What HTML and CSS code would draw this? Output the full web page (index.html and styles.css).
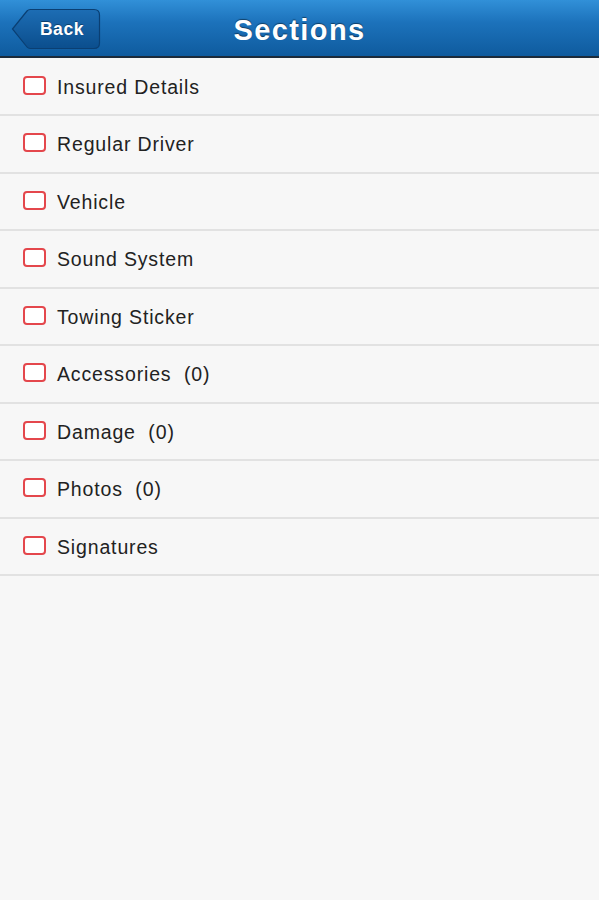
FILE: index.html
```html
<!DOCTYPE html>
<html lang="en">
<head>
  <meta charset="UTF-8" />
  <meta name="viewport" content="width=device-width, initial-scale=1" />
  <title>Sections</title>
  <link rel="stylesheet" href="styles.css">
</head>
<body>
  <header class="nav-bar">
    <div class="nav-left">
      <button class="back-btn" type="button">
        <svg class="back-shape" width="90" height="42" viewBox="0 0 90 42">
          <defs>
            <linearGradient id="backGrad" x1="0" y1="0" x2="0" y2="1">
              <stop offset="0" stop-color="#1d6db4" />
              <stop offset="1" stop-color="#0b4e8d" />
            </linearGradient>
          </defs>
          <path d="M1.5 21 L16 3 Q17.2 1.5 19.5 1.5 L83 1.5 Q88.5 1.5 88.5 7 L88.5 35 Q88.5 40.5 83 40.5 L19.5 40.5 Q17.2 40.5 16 39 Z"
                fill="url(#backGrad)" stroke="#0a3f73" stroke-width="1.2" />
        </svg>
        <span class="back-label">Back</span>
      </button>
    </div>
    <h1 class="nav-title">Sections</h1>
    <div class="nav-right"></div>
  </header>

  <ul class="section-list">
    <li class="section-row"><span class="check"></span><span class="label">Insured Details</span></li>
    <li class="section-row"><span class="check"></span><span class="label">Regular Driver</span></li>
    <li class="section-row"><span class="check"></span><span class="label">Vehicle</span></li>
    <li class="section-row"><span class="check"></span><span class="label">Sound System</span></li>
    <li class="section-row"><span class="check"></span><span class="label">Towing Sticker</span></li>
    <li class="section-row"><span class="check"></span><span class="label">Accessories&nbsp; (0)</span></li>
    <li class="section-row"><span class="check"></span><span class="label">Damage&nbsp; (0)</span></li>
    <li class="section-row"><span class="check"></span><span class="label">Photos&nbsp; (0)</span></li>
    <li class="section-row"><span class="check"></span><span class="label">Signatures</span></li>
  </ul>
</body>
</html>
```

FILE: styles.css
```css
body {
  margin: 0;
  font-family: 'Liberation Sans', Arial, sans-serif;
  background: #f7f7f7;
  color: #222;
  height: 100vh;
}

.nav-bar {
  height: 56px;
  display: grid;
  grid-template-columns: 1fr auto 1fr;
  align-items: center;
  background: linear-gradient(#3190d8, #1c72bb 40%, #0f5b9e);
  border-bottom: 2px solid #1c2b3a;
  box-sizing: content-box;
}

.nav-left {
  padding-left: 11px;
  display: flex;
  align-items: center;
}

.back-btn {
  position: relative;
  width: 90px;
  height: 42px;
  padding: 0;
  border: none;
  background: none;
  cursor: pointer;
  margin-top: 2px;
}

.back-shape {
  position: absolute;
  left: 0;
  top: 0;
}

.back-label {
  position: relative;
  display: block;
  padding-left: 12px;
  font-family: 'Liberation Sans', Arial, sans-serif;
  font-size: 17.5px;
  font-weight: bold;
  letter-spacing: 0.6px;
  color: #fff;
  text-shadow: 0 -1px 0 rgba(0, 0, 0, 0.35);
  line-height: 42px;
  text-align: center;
}

.nav-title {
  margin: 4px 0 0;
  font-size: 29px;
  font-weight: bold;
  letter-spacing: 1.4px;
  color: #fff;
  text-shadow: 0 -1px 1px rgba(0, 0, 0, 0.45);
}

.section-list {
  list-style: none;
  margin: 0;
  padding: 0;
}

.section-row {
  height: 56px;
  display: flex;
  align-items: center;
  padding-left: 23px;
  border-bottom: 2px solid #e2e2e2;
}

.section-row:first-child {
  height: 56px;
}

.section-row + .section-row {
  height: 55.5px;
}

.check {
  width: 19px;
  height: 15px;
  border: 2px solid #e4474c;
  border-radius: 4px;
  margin-top: -2px;
  background: #fff;
}

.label {
  margin-left: 11px;
  font-size: 19.5px;
  letter-spacing: 0.85px;
  color: #222;
  margin-top: 2px;
}
```
